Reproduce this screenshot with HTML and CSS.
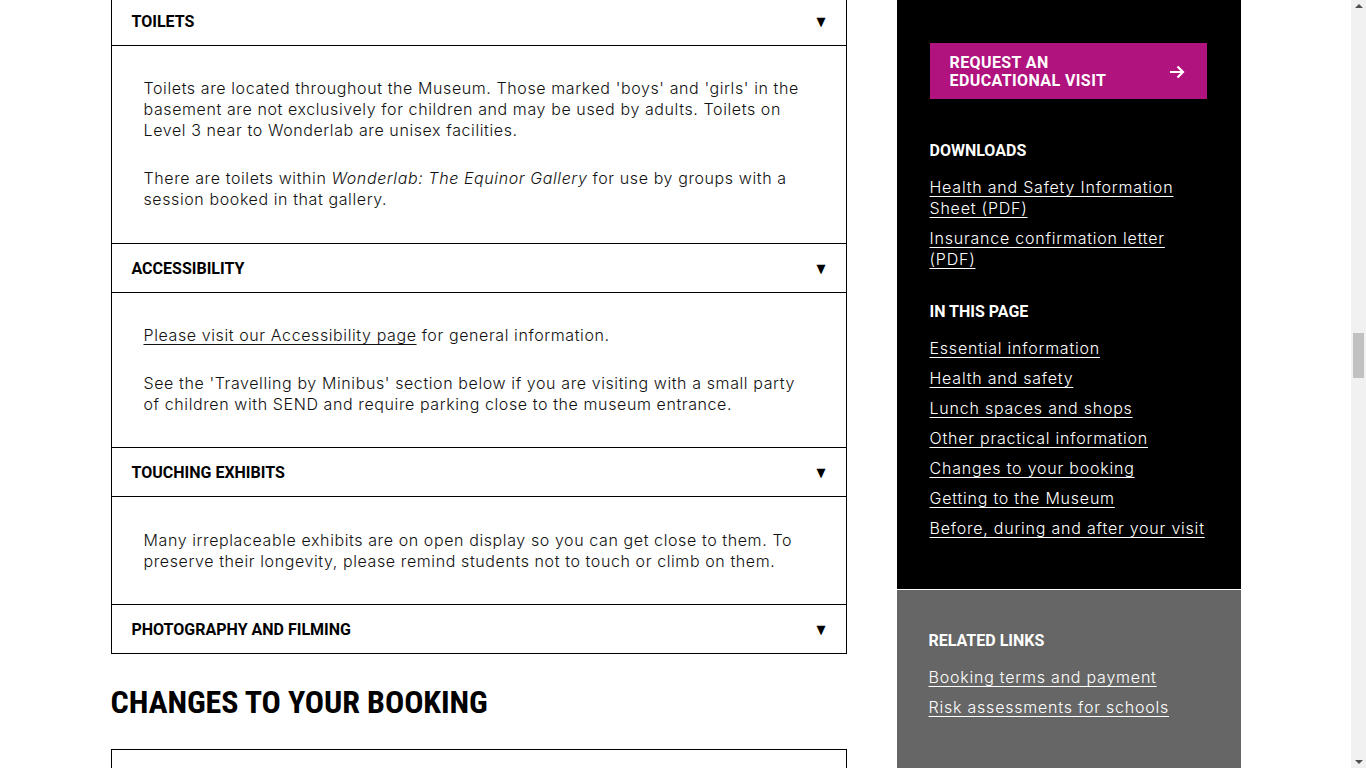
FILE: index.html
```html
<!DOCTYPE html>
<html lang="en">
<head>
<meta charset="utf-8">
<title>Plan your visit</title>
<link rel="stylesheet" href="styles.css">
</head>
<body>
<div class="viewport">
  <div class="page">
    <main class="main">
      <div class="accordion">
        <div class="acc-head first"><span>TOILETS</span><span class="tri">&#9660;</span></div>
        <div class="acc-body">
          <p>Toilets are located throughout the Museum. Those marked 'boys' and 'girls' in the basement are not exclusively for children and may be used by adults. Toilets on Level 3 near to Wonderlab are unisex facilities.</p>
          <p>There are toilets within <em>Wonderlab: The Equinor Gallery</em> for use by groups with a session booked in that gallery.</p>
        </div>
        <div class="acc-head"><span>ACCESSIBILITY</span><span class="tri">&#9660;</span></div>
        <div class="acc-body compact">
          <p><a href="#">Please visit our Accessibility page</a> for general information.</p>
          <p>See the 'Travelling by Minibus' section below if you are visiting with a small party of children with SEND and require parking close to the museum entrance.</p>
        </div>
        <div class="acc-head"><span>TOUCHING EXHIBITS</span><span class="tri">&#9660;</span></div>
        <div class="acc-body lowered">
          <p>Many irreplaceable exhibits are on open display so you can get close to them. To preserve their longevity, please remind students not to touch or climb on them.</p>
        </div>
        <div class="acc-head"><span>PHOTOGRAPHY AND FILMING</span><span class="tri">&#9660;</span></div>
      </div>
      <h2 class="section-title">CHANGES TO YOUR BOOKING</h2>
      <div class="accordion next"></div>
    </main>
    <aside class="sidebar">
      <div class="side-black">
        <a class="cta" href="#"><span>REQUEST AN<br>EDUCATIONAL VISIT</span>
          <svg class="cta-arrow" width="16" height="14" viewBox="0 0 16 14"><path d="M1 7H14M8.5 1.5L14 7L8.5 12.5" fill="none" stroke="#fff" stroke-width="2.2"/></svg>
        </a>
        <h3 class="side-h top">DOWNLOADS</h3>
        <ul class="links">
          <li><a href="#">Health and Safety Information Sheet (PDF)</a></li>
          <li><a href="#">Insurance confirmation letter (PDF)</a></li>
        </ul>
        <h3 class="side-h">IN THIS PAGE</h3>
        <ul class="links">
          <li><a href="#">Essential information</a></li>
          <li><a href="#">Health and safety</a></li>
          <li><a href="#">Lunch spaces and shops</a></li>
          <li><a href="#">Other practical information</a></li>
          <li><a href="#">Changes to your booking</a></li>
          <li><a href="#">Getting to the Museum</a></li>
          <li><a href="#">Before, during and after your visit</a></li>
        </ul>
      </div>
      <div class="side-grey">
        <h3 class="side-h">RELATED LINKS</h3>
        <ul class="links">
          <li><a href="#">Booking terms and payment</a></li>
          <li><a href="#">Risk assessments for schools</a></li>
        </ul>
      </div>
    </aside>
  </div>
  <div class="scrollbar">
    <div class="sb-up"></div>
    <div class="sb-track"><div class="sb-thumb"></div></div>
    <div class="sb-down"></div>
  </div>
</div>
</body>
</html>
```
FILE: styles.css
```css
html, body {
  margin: 0;
  padding: 0;
  height: 768px;
  overflow: hidden;
  background: #fff;
}
body {
  font-family: Inter, "Noto Sans", sans-serif;
  color: #111;
}
.viewport {
  display: flex;
  height: 768px;
}
.page {
  flex: 1;
  display: flex;
  justify-content: center;
  gap: 50px;
  margin-top: -3px;
}
.main {
  width: 736px;
}
.accordion {
  border: 1px solid #000;
  border-bottom: none;
}
.acc-head {
  box-sizing: border-box;
  display: flex;
  align-items: center;
  justify-content: space-between;
  padding: 0 20px 0 20px;
  border-bottom: 1px solid #000;
  font-family: Roboto, "Liberation Sans", sans-serif;
  font-weight: 700;
  font-size: 16px;
  color: #000;
  height: 49px;
}
.acc-head.first {
  height: 48px;
}
.tri {
  font-size: 13px;
  font-family: "DejaVu Sans", sans-serif;
  transform: scaleX(0.9);
}
.acc-body {
  border-bottom: 1px solid #000;
  padding: 32px 40px 33px 32px;
}
.acc-body.compact {
  padding-bottom: 32px;
}
.acc-body.lowered {
  padding-top: 33px;
  padding-bottom: 32px;
}
.acc-body p {
  margin: 0 0 27px;
  font-size: 16px;
  line-height: 21px;
  font-weight: 300;
  letter-spacing: 0.6px;
}
.acc-body p:last-child {
  margin-bottom: 0;
}
.acc-body a {
  color: #111;
  text-decoration: underline;
  text-underline-offset: 3px;
  text-decoration-thickness: 1px;
}
.section-title {
  font-family: "Roboto Condensed", Roboto, "Liberation Sans Narrow", sans-serif;
  font-stretch: condensed;
  font-weight: 700;
  font-size: 32px;
  letter-spacing: -0.1px;
  margin: 32px 0 31px;
  line-height: 32px;
  color: #000;
}
.accordion.next {
  height: 60px;
}
.sidebar {
  width: 344px;
  display: flex;
  flex-direction: column;
  gap: 1px;
  margin-top: 3px;
}
.side-black {
  background: #000;
  padding: 43px 30px 39px 33px;
  height: 589px;
  box-sizing: border-box;
}
.side-grey {
  background: #666;
  flex: 1;
  padding: 41px 32px 30px 32px;
}
.cta {
  display: flex;
  align-items: center;
  justify-content: space-between;
  width: 277px;
  height: 56px;
  box-sizing: border-box;
  background: #b0127e;
  color: #fff;
  text-decoration: none;
  padding: 1px 22px 0 20px;
  font-family: Roboto, "Liberation Sans", sans-serif;
  font-weight: 700;
  font-size: 16px;
  line-height: 18px;
  letter-spacing: 0.4px;
}
.side-h {
  font-family: Roboto, "Liberation Sans", sans-serif;
  font-weight: 700;
  font-size: 16px;
  color: #fff;
  margin: 32px 0 16px;
  line-height: 20px;
}
.side-h.top {
  margin-top: 42px;
}
.side-grey .side-h {
  margin-top: 0;
}
.links {
  list-style: none;
  margin: 0;
  padding: 0;
}
.links li {
  margin-bottom: 9px;
  font-size: 16px;
  line-height: 21px;
  font-weight: 300;
  letter-spacing: 0.78px;
}
.links a {
  color: #fff;
  text-decoration: underline;
  text-underline-offset: 3px;
  text-decoration-thickness: 1px;
}
.scrollbar {
  width: 15px;
  background: #f1f1f1;
  display: flex;
  flex-direction: column;
}
.sb-up, .sb-down {
  height: 17px;
  position: relative;
}
.sb-up::after, .sb-down::after {
  content: "";
  position: absolute;
  left: 4px;
  border-left: 4px solid transparent;
  border-right: 4px solid transparent;
}
.sb-up::after {
  top: 4px;
  border-bottom: 4px solid #505050;
}
.sb-down::after {
  bottom: 4px;
  border-top: 4px solid #505050;
}
.sb-track {
  flex: 1;
  position: relative;
}
.sb-thumb {
  position: absolute;
  left: 2px;
  right: 2px;
  top: 316px;
  height: 45px;
  background: #c1c1c1;
}
```
